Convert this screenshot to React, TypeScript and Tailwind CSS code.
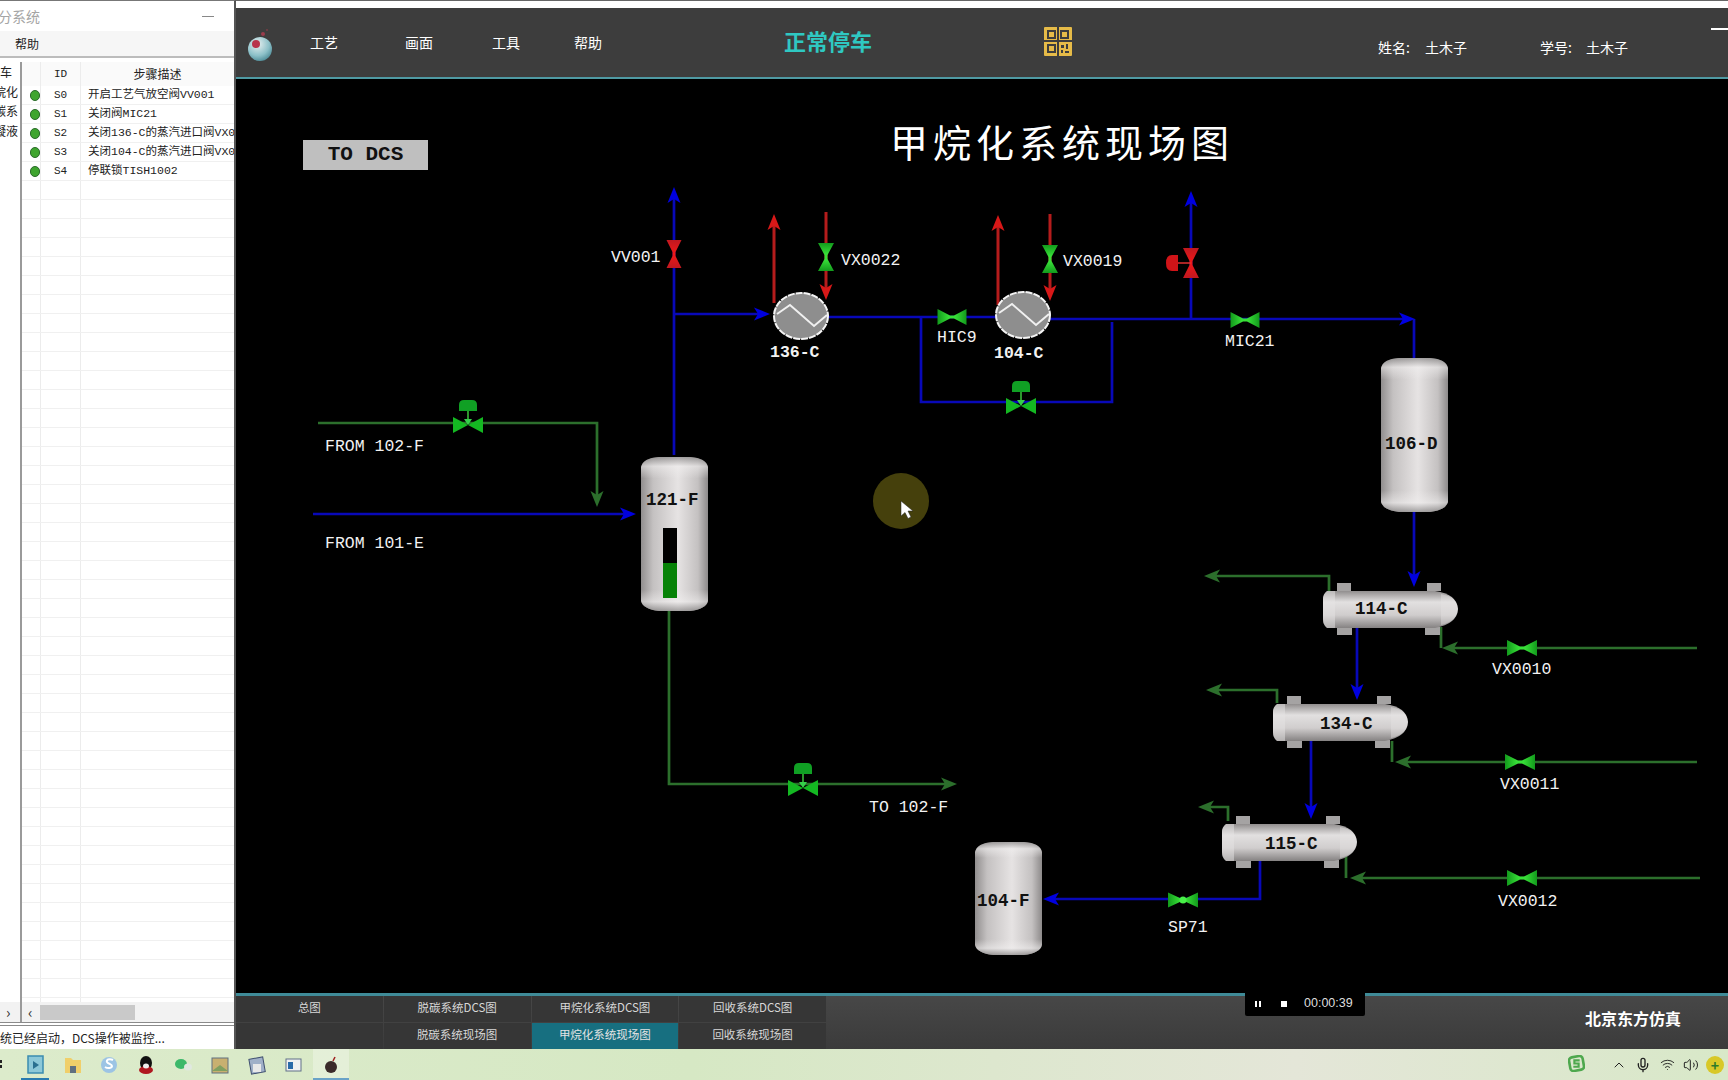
import { ChevronUp, Mic, Volume2, Wifi } from "lucide-react";

const BLUE = "#0808b8";
const BLUE_HEAD = "#0000e0";
const GREEN = "#2c6f2c";
const RED = "#b51c1c";
const RED_HEAD = "#d81818";

const steps = [
  { id: "S0", text: "开启工艺气放空阀VV001" },
  { id: "S1", text: "关闭阀MIC21" },
  { id: "S2", text: "关闭136-C的蒸汽进口阀VX0022" },
  { id: "S3", text: "关闭104-C的蒸汽进口阀VX0019" },
  { id: "S4", text: "停联锁TISH1002" },
];

const emptyRows = Array.from({ length: 44 }, (_, i) => i);

function Pipe({ d, color = BLUE }: { d: string; color?: string }) {
  return <polyline points={d} fill="none" stroke={color} strokeWidth={color === RED ? 3 : 2.7} />;
}

// tip at x,y, rot is the direction it points in (0 = right)
function Arrow({ x, y, rot = 0, color = BLUE_HEAD }: { x: number; y: number; rot?: number; color?: string }) {
  return <polygon points="0,0 -16,-6.5 -12,0 -16,6.5" fill={color} transform={`translate(${x} ${y}) rotate(${rot})`} />;
}

function Bowtie({ x, y, w = 29, h = 16, rot = 0, fill = "url(#valveGreen)" }: { x: number; y: number; w?: number; h?: number; rot?: number; fill?: string }) {
  const a = w / 2;
  const b = h / 2;
  return (
    <polygon
      points={`${-a},${-b} -2,-1.5 2,-1.5 ${a},${-b} ${a},${b} 2,1.5 -2,1.5 ${-a},${b}`}
      fill={fill}
      transform={`translate(${x} ${y}) rotate(${rot})`}
    />
  );
}

function ControlValve({ x, y }: { x: number; y: number }) {
  return (
    <g transform={`translate(${x} ${y})`}>
      <polygon points="-15,-8 0,0 -15,8" fill="#14b822" />
      <polygon points="15,-8 0,0 15,8" fill="#14b822" />
      <line x1={0} y1={-14} x2={0} y2={-2} stroke="#3cc83c" strokeWidth={1.5} />
      <polygon points="-4,-6 4,-6 0,0" fill="#35d04a" />
      <path d="M-9,-14 L-9,-20 Q-9,-25 -4,-25 L4,-25 Q9,-25 9,-20 L9,-14 Z" fill="#10a024" />
    </g>
  );
}

function Exchanger({ x, y }: { x: number; y: number }) {
  return (
    <g transform={`translate(${x} ${y})`}>
      <ellipse rx={27} ry={23} fill="#8e8e8e" stroke="#f4f4f4" strokeWidth={2} strokeDasharray="7 1" />
      <polyline points="-24,-2 -11,-11 13,10 26,-1" fill="none" stroke="#f0f0f0" strokeWidth={2} />
    </g>
  );
}

function Drum({ x, y, w, h }: { x: number; y: number; w: number; h: number }) {
  const d = `M0,10 Q2,1 18,0 L${w - 18},0 Q${w - 2},1 ${w},10 L${w},${h - 10} Q${w - 2},${h - 2} ${w - 18},${h} L18,${h} Q2,${h - 2} 0,${h - 10} Z`;
  return (
    <g transform={`translate(${x} ${y})`}>
      <path d={d} fill="url(#drumBody)" />
      <path d={d} fill="url(#drumCaps)" opacity={0.55} />
    </g>
  );
}

// horizontal exchanger shell with the four saddle stubs
function Shell({ x, y }: { x: number; y: number }) {
  return (
    <g transform={`translate(${x} ${y})`}>
      <rect x={14} y={-8} width={14} height={8} fill="#a5a3a3" />
      <rect x={104} y={-8} width={14} height={8} fill="#a5a3a3" />
      <rect x={14} y={36} width={15} height={8} fill="#a5a3a3" />
      <rect x={102} y={36} width={15} height={8} fill="#a5a3a3" />
      <path d="M4,0 L112,0 Q134,3 135,18 Q134,33 112,37 L4,37 Q0,34 0,28 L0,8 Q0,3 4,0 Z" fill="url(#shellBody)" />
      <path d="M4,0 L12,0 L12,37 L4,37 Q0,34 0,28 L0,8 Q0,3 4,0 Z" fill="#e6e3e3" opacity={0.5} />
      <path d="M118,3 Q134,6 135,18 Q134,30 118,34 Z" fill="#e6e3e3" opacity={0.4} />
    </g>
  );
}

function Diagram() {
  return (
    <svg className="absolute inset-0 h-full w-full" viewBox="236 79 1492 914">
      <defs>
        <linearGradient id="valveGreen" x1="0" y1="0" x2="1" y2="0">
          <stop offset="0" stopColor="#129a1c" />
          <stop offset="0.4" stopColor="#38e038" />
          <stop offset="0.6" stopColor="#38e038" />
          <stop offset="1" stopColor="#129a1c" />
        </linearGradient>
        <linearGradient id="valveRed" x1="0" y1="0" x2="1" y2="0">
          <stop offset="0" stopColor="#c01820" />
          <stop offset="0.5" stopColor="#f01818" />
          <stop offset="1" stopColor="#c01820" />
        </linearGradient>
        <linearGradient id="drumBody" x1="0" y1="0" x2="1" y2="0">
          <stop offset="0" stopColor="#918e8e" />
          <stop offset="0.18" stopColor="#c4c1c1" />
          <stop offset="0.55" stopColor="#e6e3e3" />
          <stop offset="0.85" stopColor="#c4c1c1" />
          <stop offset="1" stopColor="#8d8a8a" />
        </linearGradient>
        <linearGradient id="drumCaps" x1="0" y1="0" x2="0" y2="1">
          <stop offset="0" stopColor="#6e6c6c" />
          <stop offset="0.06" stopColor="#f2f0f0" />
          <stop offset="0.14" stopColor="#f2f0f0" stopOpacity="0" />
          <stop offset="0.86" stopColor="#f2f0f0" stopOpacity="0" />
          <stop offset="0.94" stopColor="#f2f0f0" />
          <stop offset="1" stopColor="#6e6c6c" />
        </linearGradient>
        <linearGradient id="shellBody" x1="0" y1="0" x2="0" y2="1">
          <stop offset="0" stopColor="#918e8e" />
          <stop offset="0.3" stopColor="#e2e0e0" />
          <stop offset="0.65" stopColor="#d0cdcd" />
          <stop offset="1" stopColor="#858282" />
        </linearGradient>
      </defs>

      {/* process gas */}
      <Pipe d="313,514 625,514" />
      <Arrow x={636} y={514} />
      <Pipe d="674,455 674,195" />
      <Arrow x={674} y={187} rot={-90} />
      <Pipe d="674,314 760,314" />
      <Arrow x={770} y={314} />
      <Pipe d="828,317 997,317" />
      <Pipe d="1050,319 1405,319" />
      <Arrow x={1415} y={319} />
      <Pipe d="1414,319 1414,358" />
      <Pipe d="1191,319 1191,198" />
      <Arrow x={1191} y={191} rot={-90} />
      <Pipe d="921,318 921,402 1112,402 1112,322" />
      <Pipe d="1414,512 1414,578" />
      <Arrow x={1414} y={587} rot={90} />
      <Pipe d="1357,627 1357,690" />
      <Arrow x={1357} y={700} rot={90} />
      <Pipe d="1311,741 1311,810" />
      <Arrow x={1311} y={819} rot={90} />
      <Pipe d="1260,861 1260,899 1052,899" />
      <Arrow x={1043} y={899} rot={180} />

      {/* steam */}
      <Pipe d="774,303 774,222" color={RED} />
      <Arrow x={774} y={214} rot={-90} color={RED_HEAD} />
      <Pipe d="826,212 826,292" color={RED} />
      <Arrow x={826} y={300} rot={90} color={RED_HEAD} />
      <Pipe d="998,305 998,223" color={RED} />
      <Arrow x={998} y={215} rot={-90} color={RED_HEAD} />
      <Pipe d="1050,214 1050,293" color={RED} />
      <Arrow x={1050} y={301} rot={90} color={RED_HEAD} />

      {/* water */}
      <Pipe d="318,423 597,423 597,498" color={GREEN} />
      <Arrow x={597} y={507} rot={90} color={GREEN} />
      <Pipe d="669,610 669,784 948,784" color={GREEN} />
      <Arrow x={957} y={784} color={GREEN} />
      <Pipe d="1329,591 1329,576 1214,576" color={GREEN} />
      <Arrow x={1204} y={576} rot={180} color={GREEN} />
      <Pipe d="1277,703 1277,690 1216,690" color={GREEN} />
      <Arrow x={1206} y={690} rot={180} color={GREEN} />
      <Pipe d="1228,821 1228,807 1208,807" color={GREEN} />
      <Arrow x={1198} y={807} rot={180} color={GREEN} />
      <Pipe d="1441,627 1441,648" color={GREEN} />
      <Pipe d="1697,648 1452,648" color={GREEN} />
      <Arrow x={1442} y={648} rot={180} color={GREEN} />
      <Pipe d="1392,741 1392,762" color={GREEN} />
      <Pipe d="1697,762 1405,762" color={GREEN} />
      <Arrow x={1395} y={762} rot={180} color={GREEN} />
      <Pipe d="1346,853 1346,878" color={GREEN} />
      <Pipe d="1700,878 1360,878" color={GREEN} />
      <Arrow x={1350} y={878} rot={180} color={GREEN} />

      {/* valves */}
      <Bowtie x={674} y={254} w={28} h={15} rot={90} fill="url(#valveRed)" />
      <Bowtie x={826} y={257} w={28} h={16} rot={90} />
      <Bowtie x={1050} y={259} w={28} h={16} rot={90} />
      <Bowtie x={952} y={317} />
      <Bowtie x={1245} y={320} />
      <Bowtie x={1522} y={648} w={30} />
      <Bowtie x={1520} y={762} w={30} />
      <Bowtie x={1522} y={878} w={30} />
      <Bowtie x={1183} y={900} w={30} h={15} />
      <circle cx={1183} cy={900} r={3.5} fill="#48f048" />
      <ControlValve x={1021} y={406} />
      <ControlValve x={468} y={425} />
      <ControlValve x={803} y={788} />
      <g>
        <Bowtie x={1191} y={263} w={30} h={16} rot={90} fill="url(#valveRed)" />
        <line x1={1178} y1={263} x2={1191} y2={263} stroke="#e03030" strokeWidth={1.5} />
        <path d="M1178,255 L1172,255 Q1166,255 1166,263 Q1166,271 1172,271 L1178,271 Z" fill="#d01418" />
      </g>

      {/* equipment */}
      <Exchanger x={801} y={316} />
      <Exchanger x={1023} y={315} />
      <Drum x={641} y={457} w={67} h={154} />
      <rect x={663} y={528} width={14} height={70} fill="#000" />
      <rect x={663} y={563} width={14} height={35} fill="#068206" />
      <Drum x={1381} y={358} w={67} h={154} />
      <Drum x={975} y={842} w={67} h={113} />
      <Shell x={1323} y={591} />
      <Shell x={1273} y={704} />
      <Shell x={1222} y={824} />
    </svg>
  );
}

function QrIcon() {
  return (
    <svg className="ml-[172px] mt-[-2px] h-[29px] w-[28px]" viewBox="0 0 28 29">
      <rect width={28} height={29} rx={1} fill="#e6bb48" />
      <g fill="none" stroke="#3d3d3d" strokeWidth={2}>
        <rect x={4} y={4} width={7} height={7} />
        <rect x={17} y={4} width={7} height={7} />
        <rect x={4} y={18} width={7} height={7} />
      </g>
      <path d="M0 14h28M14 0v29" stroke="#3d3d3d" strokeWidth={2} />
      <path d="M17 18h3v3h-3zM22 17h2v5h-2zM17 23h2v3h-2zM21 24h4v2h-4z" fill="#3d3d3d" />
    </svg>
  );
}

function LeftPanel() {
  return (
    <div className="flex h-full w-[236px] shrink-0 flex-col overflow-hidden border-t border-r-2 border-t-[#777] border-r-[#555] bg-white">
      <div className="flex h-[30px] shrink-0 items-center justify-between pr-[20px] text-[14px] text-[#a5a5a5]">
        <span className="-ml-[2px]">分系统</span>
        <span className="h-[1px] w-[12px] bg-[#888]" />
      </div>
      <div className="flex h-[27px] shrink-0 items-center border-b-2 border-[#bcbcbc] bg-[#f6f6f6] pl-[15px] text-[12px] text-[#222]">帮助</div>
      <div className="flex min-h-0 flex-1 overflow-hidden pt-[4px]">
        <div className="flex w-[22px] shrink-0 flex-col overflow-hidden border-r-2 border-[#9a9a9a] text-[12px] leading-[19.5px] text-[#222]">
          <span>车</span>
          <span className="-ml-[6px] whitespace-nowrap">烷化</span>
          <span className="-ml-[6px] whitespace-nowrap">碳系</span>
          <span className="-ml-[6px] whitespace-nowrap">凝液</span>
        </div>
        <div className="flex min-w-0 flex-1 flex-col">
          <div className="flex h-[24px] shrink-0 items-center bg-[#fafafa] text-[12px] text-[#222]">
            <span className="w-[19px] shrink-0 self-stretch border-r border-[#ececec]" />
            <span className="w-[40px] shrink-0 self-stretch border-r border-[#ececec] pl-[13px] font-['Liberation_Mono',monospace] text-[11px] leading-[24px]">ID</span>
            <span className="flex-1 text-center">步骤描述</span>
          </div>
          {steps.map((s) => (
            <div key={s.id} className="flex h-[19px] shrink-0 items-center border-b border-[#f0f0f0] whitespace-nowrap font-['Liberation_Mono','Noto_Sans_CJK_SC',monospace] text-[11.5px] text-[#222]">
              <span className="flex w-[19px] shrink-0 items-center justify-center self-stretch border-r border-[#ececec]">
                <span className="ml-[8px] h-[11px] w-[11px] rounded-full border border-[#2b6b2b] bg-[#3fa52f]" />
              </span>
              <span className="w-[40px] shrink-0 self-stretch border-r border-[#ececec] pl-[13px] text-[11px] leading-[19px]">{s.id}</span>
              <span className="pl-[7px]">{s.text}</span>
            </div>
          ))}
          {emptyRows.map((i) => (
            <div key={i} className="flex h-[19px] shrink-0 border-b border-[#f0f0f0]">
              <span className="w-[19px] shrink-0 border-r border-[#ececec]" />
              <span className="w-[40px] shrink-0 border-r border-[#ececec]" />
            </div>
          ))}
        </div>
      </div>
      <div className="flex h-[20px] shrink-0 items-center bg-[#f2f2f2] text-[12px] text-[#333]">
        <span className="w-[22px] shrink-0 border-r-2 border-[#9a9a9a] pl-[6px] text-[15px] leading-[20px]">›</span>
        <span className="w-[18px] shrink-0 pl-[6px] text-[15px] leading-[20px]">‹</span>
        <span className="h-[15px] w-[95px] bg-[#c9c9c9]" />
      </div>
      <div className="flex h-[27px] shrink-0 items-center overflow-hidden border-t-4 border-double border-[#8a8a8a] whitespace-nowrap text-[12px] text-[#222]">统已经启动，DCS操作被监控...</div>
    </div>
  );
}

function NavTab({ label, active }: { label: string; active?: boolean }) {
  return (
    <div className={active ? "flex items-center justify-center bg-[#176f80] pb-[3px] text-[11.5px] text-[#e4e4e4]" : "flex items-center justify-center bg-[#363636] pb-[3px] text-[11.5px] text-[#d8d8d8]"}>
      {label}
    </div>
  );
}

function Taskbar() {
  return (
    <div className="flex h-[31px] shrink-0 items-center bg-[linear-gradient(90deg,#dcebcb_0%,#d6e8c4_40%,#e4e6d8_75%,#d8e8c8_100%)]">
      <div className="relative flex h-full w-[355px] shrink-0 items-center">
        <span className="absolute bottom-0 left-[21px] h-[2px] w-[28px] bg-[#2a7bb0]" />
        <span className="absolute bottom-0 left-[313px] h-[2px] w-[36px] bg-[#2a7bb0]" />
        <span className="absolute inset-y-0 left-[313px] w-[36px] bg-white/30" />
        <svg className="relative h-full w-full" viewBox="0 0 355 31">
          <rect x={0} y={11} width={2} height={3} fill="#222" />
          <rect x={0} y={16} width={2} height={3} fill="#222" />
          <rect x={28} y={7} width={15} height={17} fill="#8cc8d8" stroke="#3a8cb0" strokeWidth={1.5} />
          <polygon points="33,12 39,16 33,20" fill="#2a7090" />
          <path d="M65 9h6l2 2h8v13H65z" fill="#f0cf6a" />
          <rect x={70} y={17} width={6} height={7} fill="#607080" />
          <circle cx={109} cy={16} r={8} fill="#9cc4e4" />
          <path d="M113 11c-4-2-7 0-6 2s5 2 5 4-4 3-7 1" fill="none" stroke="#fff" strokeWidth={2} />
          <ellipse cx={146} cy={14} rx={6} ry={7} fill="#111" />
          <ellipse cx={146} cy={21} rx={7} ry={4} fill="#b01820" />
          <ellipse cx={146} cy={17} rx={3} ry={2.5} fill="#eee" />
          <ellipse cx={181} cy={15} rx={6} ry={5} fill="#3cb86a" />
          <ellipse cx={188} cy={18} rx={4} ry={3.5} fill="#e0e8e0" />
          <rect x={212} y={9} width={16} height={15} fill="#c8b070" stroke="#607080" />
          <path d="M212 22l8-6 8 6z" fill="#80a060" />
          <rect x={250} y={9} width={14} height={15} fill="#a0b0c8" stroke="#405070" transform="rotate(-10 257 16)" />
          <rect x={253} y={15} width={8} height={8} fill="#e8e8e8" />
          <rect x={286} y={10} width={15} height={12} fill="#f0f0f0" stroke="#607088" />
          <rect x={288} y={13} width={5} height={7} fill="#2a6aa8" />
          <circle cx={331} cy={18} r={6} fill="#3a2a2a" />
          <path d="M333 12l2-4" stroke="#a02020" strokeWidth={1.5} />
        </svg>
      </div>
      <div className="ml-auto flex items-center pr-[4px] text-[#222]">
        <svg className="mr-[26px] mb-[3px] h-[17px] w-[17px]" viewBox="0 0 16 16">
          <rect x={1.5} y={1.5} width={13} height={13} rx={3} fill="none" stroke="#4ea84e" strokeWidth={2.5} transform="rotate(-10 8 8)" />
          <path d="M11 5H6v3h4v3H5" fill="none" stroke="#4ea84e" strokeWidth={2} />
        </svg>
        <ChevronUp className="h-[16px] w-[16px]" strokeWidth={1.5} />
        <Mic className="ml-[8px] h-[16px] w-[16px]" strokeWidth={2} />
        <Wifi className="ml-[9px] h-[15px] w-[15px]" strokeWidth={1.5} />
        <Volume2 className="ml-[8px] h-[16px] w-[16px]" strokeWidth={1.5} />
        <span className="ml-[7px] flex h-[18px] w-[18px] items-center justify-center rounded-full bg-[#d8c828] text-[14px] font-bold leading-none text-[#2a7a2a]">+</span>
      </div>
    </div>
  );
}

const labelClass = "absolute mt-[1px] whitespace-nowrap font-['Liberation_Mono',monospace] text-[16.5px] leading-[20px] text-[#f2f2f2]";
const tagClass = "absolute mt-[1px] whitespace-nowrap font-['Liberation_Mono',monospace] text-[17.5px] font-bold leading-[20px] text-[#111]";

export default function App() {
  return (
    <div className="flex h-[1080px] w-[1728px] flex-col overflow-hidden bg-black font-['Noto_Sans_CJK_SC',sans-serif]">
      <div className="flex h-[1049px] shrink-0">
        <LeftPanel />
        <div className="flex min-w-0 flex-1 flex-col">
          <div className="h-[8px] shrink-0 border-t border-[#666] bg-white" />
          <div className="relative flex h-[71px] shrink-0 items-center border-b-[2px] border-[#4f9aa3] bg-[#3d3d3d] text-white">
            <svg className="ml-[11px] h-[40px] w-[30px]" viewBox="0 0 30 40">
              <defs>
                <radialGradient id="ball" cx="0.4" cy="0.3" r="0.8">
                  <stop offset="0" stopColor="#e8f0f0" />
                  <stop offset="0.6" stopColor="#8cc0c8" />
                  <stop offset="1" stopColor="#3f7f8c" />
                </radialGradient>
              </defs>
              <circle cx={13} cy={26} r={12} fill="url(#ball)" />
              <circle cx={9} cy={21} r={4} fill="#b8344c" />
              <circle cx={16} cy={11} r={2} fill="#9a3c4c" />
              <circle cx={20} cy={7} r={1} fill="#7a3c44" />
            </svg>
            <span className="ml-[33px] text-[14px]">工艺</span>
            <span className="ml-[67px] text-[14px]">画面</span>
            <span className="ml-[59px] text-[14px]">工具</span>
            <span className="ml-[54px] text-[14px]">帮助</span>
            <span className="ml-[182px] mt-[-5px] text-[22px] font-bold text-[#2fc8c2]">正常停车</span>
            <QrIcon />
            <span className="ml-[306px] mt-[10px] flex w-[89px] justify-between text-[14px]"><span>姓名:</span><span>土木子</span></span>
            <span className="ml-[73px] mt-[10px] flex w-[88px] justify-between text-[14px]"><span>学号:</span><span>土木子</span></span>
            <span className="absolute right-0 top-[20px] h-[2px] w-[17px] bg-white" />
          </div>

          <div className="relative min-h-0 flex-1 bg-black">
            <Diagram />
            <div className="absolute left-[67px] top-[61px] flex h-[30px] w-[125px] items-center justify-center whitespace-pre bg-[#bfbfbf] font-['Liberation_Mono',monospace] text-[21px] font-bold text-[#111]">TO DCS</div>
            <h1 className="absolute left-[654px] top-[32px] whitespace-nowrap text-[38px] font-normal leading-[60px] tracking-[5px] text-white">甲烷化系统现场图</h1>

            <span className={`${labelClass} left-[89px] top-[357px]`}>FROM 102-F</span>
            <span className={`${labelClass} left-[89px] top-[454px]`}>FROM 101-E</span>
            <span className={`${labelClass} left-[633px] top-[718px]`}>TO 102-F</span>
            <span className={`${labelClass} left-[375px] top-[168px]`}>VV001</span>
            <span className={`${labelClass} left-[605px] top-[171px]`}>VX0022</span>
            <span className={`${labelClass} left-[827px] top-[172px]`}>VX0019</span>
            <span className={`${labelClass} left-[701px] top-[248px]`}>HIC9</span>
            <span className={`${labelClass} left-[534px] top-[263px] font-bold`}>136-C</span>
            <span className={`${labelClass} left-[758px] top-[264px] font-bold`}>104-C</span>
            <span className={`${labelClass} left-[989px] top-[252px]`}>MIC21</span>
            <span className={`${labelClass} left-[1256px] top-[580px]`}>VX0010</span>
            <span className={`${labelClass} left-[1264px] top-[695px]`}>VX0011</span>
            <span className={`${labelClass} left-[1262px] top-[812px]`}>VX0012</span>
            <span className={`${labelClass} left-[932px] top-[838px]`}>SP71</span>

            <span className={`${tagClass} left-[410px] top-[410px]`}>121-F</span>
            <span className={`${tagClass} left-[1149px] top-[354px]`}>106-D</span>
            <span className={`${tagClass} left-[741px] top-[811px]`}>104-F</span>
            <span className={`${tagClass} left-[1119px] top-[519px]`}>114-C</span>
            <span className={`${tagClass} left-[1084px] top-[634px]`}>134-C</span>
            <span className={`${tagClass} left-[1029px] top-[754px]`}>115-C</span>

            {/* recorder's mouse highlight */}
            <span className="absolute left-[637px] top-[394px] h-[56px] w-[56px] rounded-full bg-[#45400c]" />
            <svg className="absolute left-[664px] top-[421px] h-[20px] w-[14px]" viewBox="0 0 14 20">
              <path d="M1 1v15l4-3.5 3 6 3-1.5-3-6h5z" fill="#fff" stroke="#222" strokeWidth={0.5} />
            </svg>
          </div>

          <div className="relative flex h-[56px] shrink-0 border-t-[3px] border-[#3f8b98] bg-[linear-gradient(180deg,#474747,#3b3b3b)]">
            <div className="grid w-[590px] grid-cols-4 grid-rows-2 gap-[1px]">
              <NavTab label="总图" />
              <NavTab label="脱碳系统DCS图" />
              <NavTab label="甲烷化系统DCS图" />
              <NavTab label="回收系统DCS图" />
              <NavTab label="" />
              <NavTab label="脱碳系统现场图" />
              <NavTab label="甲烷化系统现场图" active />
              <NavTab label="回收系统现场图" />
            </div>
            <span className="ml-auto mr-[47px] mt-[10px] text-[16px] font-bold text-white">北京东方仿真</span>

            <div className="absolute left-[1009px] top-[-5px] flex h-[25px] w-[120px] items-center rounded-b-[2px] bg-black text-[12.5px] text-[#ddd]">
              <span className="ml-[10px] flex gap-[2px]">
                <span className="h-[6px] w-[2px] bg-white" />
                <span className="h-[6px] w-[2px] bg-white" />
              </span>
              <span className="ml-[20px] h-[6px] w-[6px] bg-white" />
              <span className="ml-[17px] font-['Liberation_Sans',sans-serif]">00:00:39</span>
            </div>
          </div>
        </div>
      </div>
      <Taskbar />
    </div>
  );
}
